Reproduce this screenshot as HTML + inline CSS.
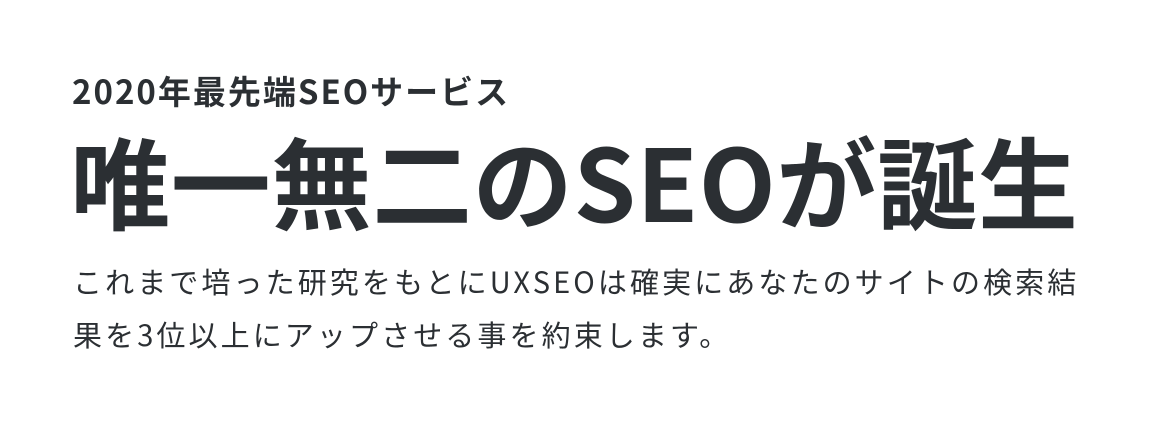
<!DOCTYPE html>
<html><head><meta charset="utf-8"><style>
html,body{margin:0;padding:0;background:#fff;width:1164px;height:438px;overflow:hidden}
body{font-family:"Noto Sans CJK JP",sans-serif;color:#2b2f33}
.a{position:absolute;left:72px;top:74px;font-size:33px;font-weight:700;line-height:33px;white-space:nowrap;letter-spacing:2px}
.b{position:absolute;left:70px;top:129px;font-size:100px;font-weight:700;line-height:100px;white-space:nowrap;letter-spacing:0.7px}
.c{position:absolute;left:73px;top:255px;font-size:29px;line-height:53px;width:1080px;letter-spacing:3.1px;white-space:nowrap}
</style></head><body>
<div class="a">2020年最先端SEOサービス</div>
<div class="b">唯一無二のSEOが誕生</div>
<div class="c">これまで培った研究をもとにUXSEOは確実にあなたのサイトの検索結<br>果を3位以上にアップさせる事を約束します。</div>
</body></html>
